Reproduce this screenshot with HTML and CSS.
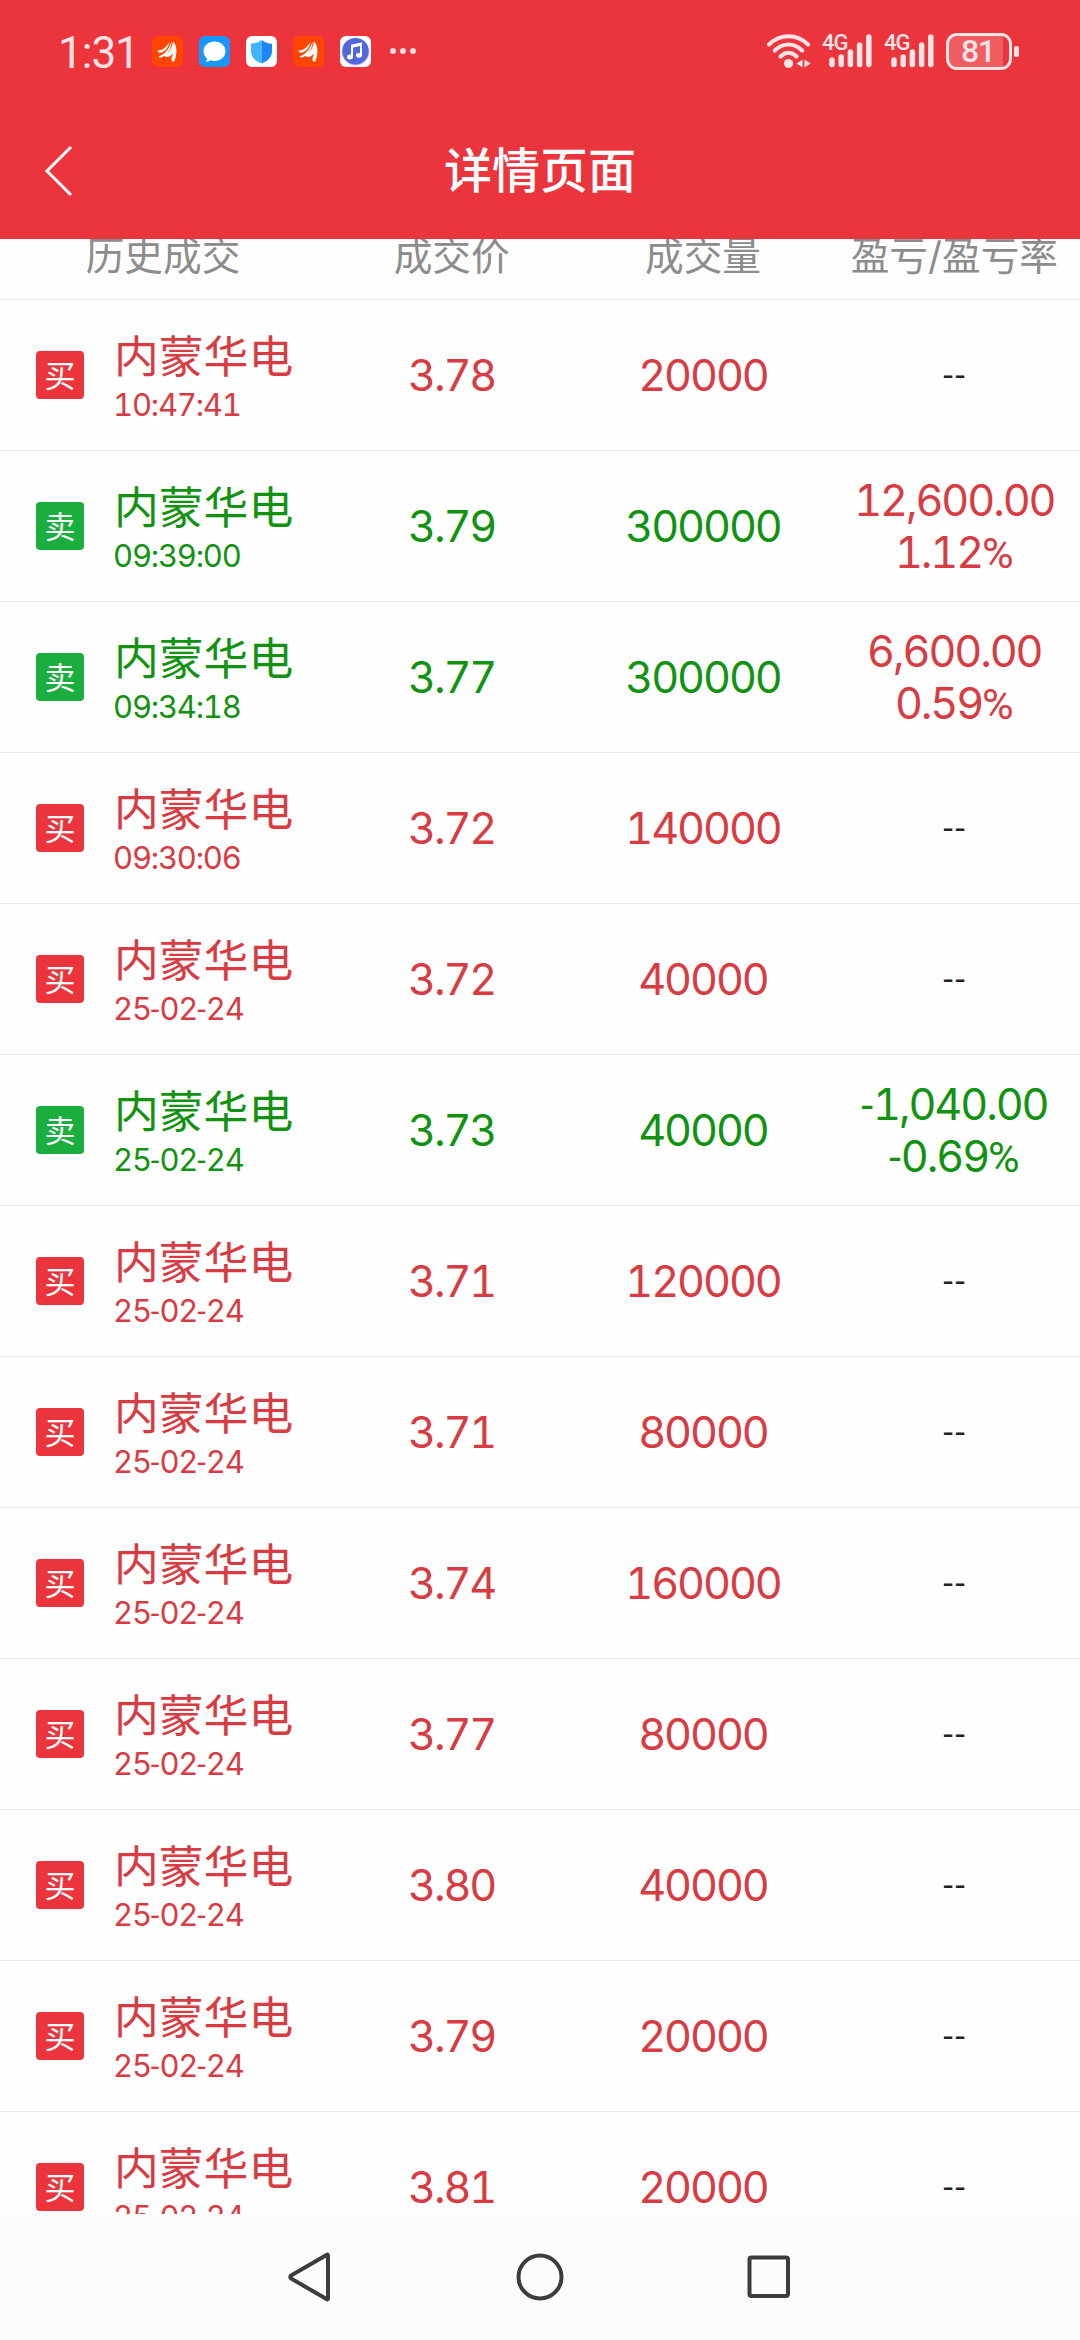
FILE: index.html
```html
<!DOCTYPE html>
<html lang="zh-CN">
<head>
    <meta charset="UTF-8">
    <title>详情页面</title>
    <link rel="stylesheet" href="styles.css">
</head>
<body>
    <header class="top">
        <div class="status">
            <span class="clock">1:31</span>
            <div class="notifications">
                <svg class="app-icon" viewBox="0 0 31 31">
                    <rect width="31" height="31" rx="6" fill="#ff4500"/>
                    <path id="wing" fill="#fff" d="M5.500 14.500C10 14.800 14 11.500 17.500 6C17 11 12.500 16.200 8.500 16.800C7 17 6 16 5.500 14.500ZM6.500 20.500C13 18.500 17 13 19.500 5.500C19.800 12 14.500 19.500 10 21.200C8.500 21.800 7.300 21.500 6.500 20.500ZM12 19.500C17 16.500 20 12 21 5.500C25 9 25.500 17 22.500 25C21 26.500 19.500 25.500 19.500 23C19.800 21 20.500 19.500 21.200 17.500C18 20.500 15.500 22.500 12 19.500Z"/>
                </svg>
                <svg class="app-icon" viewBox="0 0 31 31">
                    <rect width="31" height="31" rx="6" fill="#1698ff"/>
                    <path fill="#fff" d="M15.500 5.500C21.500 5.500 26.500 9.500 26.500 15.200S21.500 25 15.500 25C13.800 25 12.500 24.700 11.500 24.300C10 25.300 8.500 25.800 6.800 25.800C7.800 24.500 8 23.200 7.800 22C5.800 20.300 4.500 18 4.500 15.200C4.500 9.500 9.500 5.500 15.500 5.500Z"/>
                </svg>
                <svg class="app-icon" viewBox="0 0 31 31">
                    <rect width="31" height="31" rx="6" fill="#fff"/>
                    <path fill="#3db5ff" d="M15.500 4C12 6.500 9 7.500 5 7.800V15C5 21 9 25 15.500 27.500Z"/>
                    <path fill="#1e86f5" d="M15.500 4C19 6.500 22 7.500 26 7.800V15C26 21 22 25 15.500 27.500Z"/>
                </svg>
                <svg class="app-icon" viewBox="0 0 31 31">
                    <rect width="31" height="31" rx="6" fill="#ff4500"/>
                    <use href="#wing"/>
                </svg>
                <svg class="app-icon" viewBox="0 0 31 31">
                    <rect width="31" height="31" rx="6" fill="#fff"/>
                    <circle cx="15.500" cy="15.800" r="13.800" fill="#e3b5f4"/>
                    <circle cx="15.500" cy="15.200" r="13.200" fill="#4f68da"/>
                    <path fill="none" stroke="#fff" stroke-width="2" d="M12 20.500V9.500L21 7.500V18.500"/>
                    <path stroke="#fff" stroke-width="2.500" d="M12 10.500L21 8.500"/>
                    <ellipse cx="10" cy="21" rx="3" ry="2.400" fill="#fff"/>
                    <ellipse cx="19" cy="19.300" rx="3" ry="2.400" fill="#fff"/>
                </svg>
            </div>
            <svg class="more" viewBox="0 0 28 8">
                <circle cx="4" cy="4" r="2.900"/>
                <circle cx="14" cy="4" r="2.900"/>
                <circle cx="24" cy="4" r="2.900"/>
            </svg>

            <div class="indicators">
                <svg class="wifi" viewBox="0 0 46 36">
                    <g fill="none" stroke="currentColor" stroke-width="4.200" stroke-linecap="round">
                        <path d="M3 11.500C14 .5 31 .5 42 11.500"/>
                        <path d="M8.800 17.500C17 9.500 28 9.500 36.200 17.500"/>
                        <path d="M14.500 23.500C19.500 18.500 25.500 18.500 30.500 23.500"/>
                    </g>
                    <circle cx="22.500" cy="30.500" r="4.600" fill="currentColor"/>
                    <path fill="currentColor" d="M30.500 30.500L36.500 26.500V34.500ZM38.500 26.500L44.500 30.500L38.500 34.500Z"/>
                </svg>
                <div class="signal">
                    <span class="net">4G</span>
                    <svg viewBox="0 0 50 36">
                        <path d="M10 27V31.500M19.200 24V31.500M28.400 19V31.500M37.600 12V31.500M46.800 4V31.500"/>
                    </svg>
                </div>
                <div class="signal">
                    <span class="net">4G</span>
                    <svg viewBox="0 0 50 36">
                        <path d="M10 27V31.500M19.200 24V31.500M28.400 19V31.500M37.600 12V31.500M46.800 4V31.500"/>
                    </svg>
                </div>
                <div class="battery">81</div>
                <div class="battery-tip"></div>
            </div>
        </div>

        <div class="navbar">
            <svg class="back" viewBox="0 0 30 54">
                <path d="M27 3L3 27L27 51"/>
            </svg>
            <h1>详情页面</h1>
        </div>
    </header>

    <main class="list">
        <div class="row head">
            <div>历史成交</div>
            <div>成交价</div>
            <div>成交量</div>
            <div>盈亏/盈亏率</div>
        </div>
        <div class="row buy">
            <div class="stock"><span class="tag">买</span><div><p class="name">内蒙华电</p><p class="time">10:47:41</p></div></div>
            <div>3.78</div>
            <div>20000</div>
            <div class="none">--</div>
        </div>
        <div class="row sell">
            <div class="stock"><span class="tag">卖</span><div><p class="name">内蒙华电</p><p class="time">09:39:00</p></div></div>
            <div>3.79</div>
            <div>300000</div>
            <div class="gain">12,600.00<br>1.12<i>%</i></div>
        </div>
        <div class="row sell">
            <div class="stock"><span class="tag">卖</span><div><p class="name">内蒙华电</p><p class="time">09:34:18</p></div></div>
            <div>3.77</div>
            <div>300000</div>
            <div class="gain">6,600.00<br>0.59<i>%</i></div>
        </div>
        <div class="row buy">
            <div class="stock"><span class="tag">买</span><div><p class="name">内蒙华电</p><p class="time">09:30:06</p></div></div>
            <div>3.72</div>
            <div>140000</div>
            <div class="none">--</div>
        </div>
        <div class="row buy">
            <div class="stock"><span class="tag">买</span><div><p class="name">内蒙华电</p><p class="time">25<i>-</i>02<i>-</i>24</p></div></div>
            <div>3.72</div>
            <div>40000</div>
            <div class="none">--</div>
        </div>
        <div class="row sell">
            <div class="stock"><span class="tag">卖</span><div><p class="name">内蒙华电</p><p class="time">25<i>-</i>02<i>-</i>24</p></div></div>
            <div>3.73</div>
            <div>40000</div>
            <div class="loss"><i>-</i>1,040.00<br><i>-</i>0.69<i>%</i></div>
        </div>
        <div class="row buy">
            <div class="stock"><span class="tag">买</span><div><p class="name">内蒙华电</p><p class="time">25<i>-</i>02<i>-</i>24</p></div></div>
            <div>3.71</div>
            <div>120000</div>
            <div class="none">--</div>
        </div>
        <div class="row buy">
            <div class="stock"><span class="tag">买</span><div><p class="name">内蒙华电</p><p class="time">25<i>-</i>02<i>-</i>24</p></div></div>
            <div>3.71</div>
            <div>80000</div>
            <div class="none">--</div>
        </div>
        <div class="row buy">
            <div class="stock"><span class="tag">买</span><div><p class="name">内蒙华电</p><p class="time">25<i>-</i>02<i>-</i>24</p></div></div>
            <div>3.74</div>
            <div>160000</div>
            <div class="none">--</div>
        </div>
        <div class="row buy">
            <div class="stock"><span class="tag">买</span><div><p class="name">内蒙华电</p><p class="time">25<i>-</i>02<i>-</i>24</p></div></div>
            <div>3.77</div>
            <div>80000</div>
            <div class="none">--</div>
        </div>
        <div class="row buy">
            <div class="stock"><span class="tag">买</span><div><p class="name">内蒙华电</p><p class="time">25<i>-</i>02<i>-</i>24</p></div></div>
            <div>3.80</div>
            <div>40000</div>
            <div class="none">--</div>
        </div>
        <div class="row buy">
            <div class="stock"><span class="tag">买</span><div><p class="name">内蒙华电</p><p class="time">25<i>-</i>02<i>-</i>24</p></div></div>
            <div>3.79</div>
            <div>20000</div>
            <div class="none">--</div>
        </div>
        <div class="row buy">
            <div class="stock"><span class="tag">买</span><div><p class="name">内蒙华电</p><p class="time">25<i>-</i>02<i>-</i>24</p></div></div>
            <div>3.81</div>
            <div>20000</div>
            <div class="none">--</div>
        </div>
    </main>

    <nav class="system-nav">
        <svg viewBox="0 0 50 50"><path d="M42 3.500V46.500Q42 48 40.500 47L5 26.500Q3.500 25 5 23.500L40.500 3Q42 2 42 3.500Z"/></svg>
        <svg viewBox="0 0 50 50"><circle cx="25" cy="25" r="21.500"/></svg>
        <svg viewBox="0 0 50 50"><rect x="5.500" y="5.500" width="38.500" height="38.500" rx="2"/></svg>
    </nav>
</body>
</html>
```

FILE: styles.css
```css
* {
    box-sizing: border-box;
}

body {
    margin: 0;
    height: 2340px;
    display: flex;
    flex-direction: column;
    overflow: hidden;
    background-color: #fff;
    font-family: Inter, "Noto Sans CJK SC", sans-serif;
    font-variant-numeric: tabular-nums;
}

/* Red header */
.top {
    height: 239px;
    flex: none;
    background-color: #eb343c;
    color: #fff;
}

.status {
    height: 102px;
    padding: 0 61px 0 58px;
    display: flex;
    align-items: center;
    color: #ffe3e5;
}

.clock {
    width: 94px;
    font-family: Roboto, sans-serif;
    font-size: 44px;
    line-height: 50px;
    letter-spacing: -1px;
    padding-top: 4px;
}

.notifications {
    display: flex;
    gap: 16px;
}

.app-icon {
    width: 31px;
    height: 31px;
}

.more {
    width: 28px;
    height: 8px;
    margin-left: 18px;
    fill: currentColor;
}

.indicators {
    margin-left: auto;
    display: flex;
    align-items: center;
}

.wifi {
    width: 46px;
    height: 36px;
}

.signal {
    position: relative;
    width: 50px;
    height: 36px;
    margin-left: 10px;
}

.signal + .signal {
    margin-left: 12px;
}

.signal svg {
    display: block;
    fill: none;
    stroke: currentColor;
    stroke-width: 5.500;
    stroke-linecap: round;
}

.net {
    position: absolute;
    left: 0;
    top: 0;
    font-family: Roboto, sans-serif;
    font-size: 22px;
    line-height: 20px;
    font-weight: 500;
    letter-spacing: -1px;
}

.battery {
    width: 66px;
    height: 37px;
    margin-left: 12px;
    border: 3px solid #ffe3e5;
    border-radius: 11px;
    background: linear-gradient(to right, #ef5d63 54px, transparent 54px);
    font-family: Roboto, sans-serif;
    font-size: 32px;
    line-height: 31px;
    font-weight: 500;
    letter-spacing: -1.5px;
    padding-left: 12px;
}

.battery-tip {
    width: 5px;
    height: 11px;
    margin: 0 0 0 2px;
    border-radius: 2px;
    background-color: #ffe3e5;
}

.navbar {
    height: 137px;
    padding: 1px 44px 0 44px;
    display: grid;
    grid-template-columns: 30px 1fr 30px;
    align-items: center;
}

.back {
    width: 30px;
    height: 54px;
    fill: none;
    stroke: #fff;
    stroke-width: 3;
}

.navbar h1 {
    margin: 0;
    text-align: center;
    font-size: 48px;
    line-height: 60px;
    font-weight: 500;
}

/* Deals list, scrolled a little so the heading is cut off */
.list {
    height: 1975px;
    flex: none;
    overflow: hidden;
    background-color: #fefefe;
}

.row {
    height: 151px;
    display: grid;
    grid-template-columns: 326px 1fr 1fr 1fr;
    align-items: center;
    border-bottom: 1px solid #e6e6e6;
    text-align: center;
    font-size: 43.2px;
    line-height: 52px;
    letter-spacing: -2.1px;
}

.row.head {
    height: 87px;
    margin-top: -26px;
    color: #8c8c8c;
    font-size: 38.7px;
    letter-spacing: 0;
}

/* narrow hyphen and percent signs */
.row i {
    font-family: Roboto, sans-serif;
    font-style: normal;
    line-height: 1;
    letter-spacing: 0;
}

.buy,
.gain {
    color: #d83b42;
}

.sell,
.loss {
    color: #119311;
}

.stock {
    display: flex;
    align-items: center;
    text-align: left;
    padding-left: 36px;
}

.stock p {
    margin: 0;
}

.tag {
    width: 48px;
    height: 48px;
    margin-right: 29px;
    border-radius: 4px;
    background-color: #eb343c;
    color: #fff;
    text-align: center;
    font-size: 31px;
    line-height: 49px;
    letter-spacing: 0;
}

.sell .tag {
    background-color: #1aae3f;
}

.name {
    padding: 4px 0 0 1px;
    font-size: 44.800px;
    line-height: 56px;
    letter-spacing: 0;
}

.time {
    font-size: 31px;
    line-height: 40px;
    letter-spacing: -1.2px;
}

.none {
    padding: 2px 0 0 2px;
    color: #222;
    font-family: Roboto, sans-serif;
    font-size: 35px;
    letter-spacing: 2.5px;
}

/* Android buttons */
.system-nav {
    flex: 1;
    display: flex;
    justify-content: center;
    align-items: center;
    gap: 179px;
    background-color: #fcfcfc;
}

.system-nav svg {
    width: 50px;
    height: 50px;
    fill: none;
    stroke: #3c3c3c;
    stroke-width: 4;
}
```
